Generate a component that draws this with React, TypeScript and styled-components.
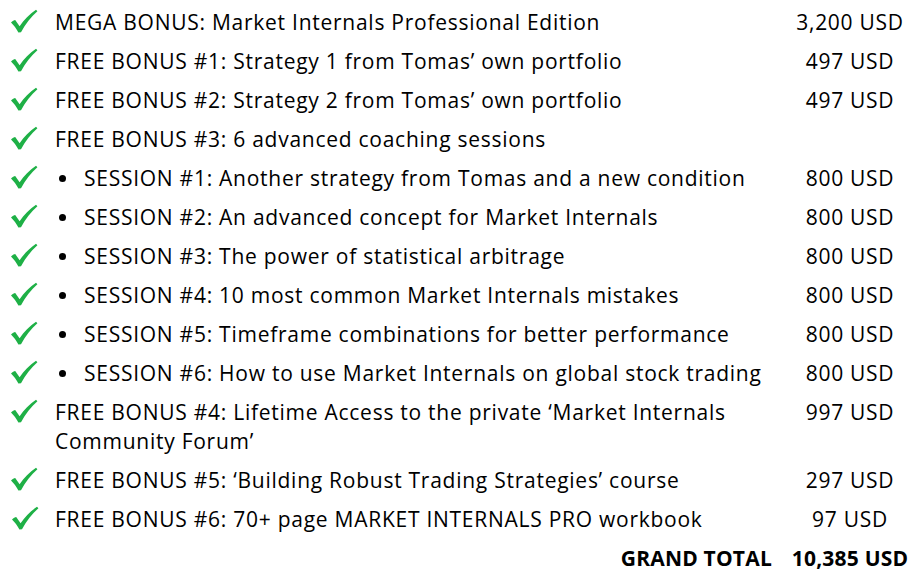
import React from "react";
import styled, { createGlobalStyle } from "styled-components";

const Global = createGlobalStyle`
  html, body { margin: 0; padding: 0; background: #ffffff; }
  body { font-family: "Open Sans", "Noto Sans", sans-serif; color: #000; }
`;

const Page = styled.div`
  width: 918px;
  height: 582px;
  padding-top: 3px;
  box-sizing: border-box;
  overflow: hidden;
`;

const Row = styled.div`
  display: grid;
  grid-template-columns: 55px 735px 120px;
  align-items: start;
  padding: 5px 0;
  font-size: 21px;
  letter-spacing: 0.74px;
  line-height: 29px;
`;

const CheckCell = styled.div<{ $dx?: number }>`
  display: flex;
  align-items: flex-start;
  padding-left: ${(p) => 10 + (p.$dx ?? 0)}px;
  height: 29px;
  box-sizing: border-box;
  padding-top: 1px;
`;

const Text = styled.div`
  display: flex;
  align-items: center;
  white-space: nowrap;
`;

const Bullet = styled.span`
  display: inline-block;
  flex: none;
  width: 7px;
  height: 7px;
  border-radius: 50%;
  background: #000;
  margin: 0 18px 0 4px;
`;

const Price = styled.div<{ $bold?: boolean }>`
  text-align: center;
  font-weight: ${(p) => (p.$bold ? 700 : 400)};
  letter-spacing: ${(p) => (p.$bold ? "0.2px" : "0.72px")};
`;

const TotalLabel = styled.div`
  grid-column: 2;
  text-align: right;
  padding-right: 18px;
  font-weight: 700;
  letter-spacing: 0.2px;
`;

const Check = ({ dx }: { dx?: number }) => (
  <CheckCell $dx={dx}>
    <svg width="28" height="24" viewBox="0 0 28 24">
      <path
        d="M1 13.5 C2.5 12 4 11.2 5.2 11 L9.6 17.2 C14 11 19.5 5.2 26 0.8 L27.4 2.2 C21 8 15.5 15 11 23.2 L8.4 23.4 C6.4 19.6 3.8 16.2 1 13.5 Z"
        fill="#1eb046"
      />
    </svg>
  </CheckCell>
);

type Item = { text: React.ReactNode; price?: string; sub?: boolean; dx?: number };

const items: Item[] = [
  { text: "MEGA BONUS: Market Internals Professional Edition", price: "3,200 USD" },
  { text: "FREE BONUS #1: Strategy 1 from Tomas\u2019 own portfolio", price: "497 USD" },
  { text: "FREE BONUS #2: Strategy 2 from Tomas\u2019 own portfolio", price: "497 USD" },
  { text: "FREE BONUS #3: 6 advanced coaching sessions" },
  { text: "SESSION #1: Another strategy from Tomas and a new condition", price: "800 USD", sub: true },
  { text: "SESSION #2: An advanced concept for Market Internals", price: "800 USD", sub: true },
  { text: "SESSION #3: The power of statistical arbitrage", price: "800 USD", sub: true },
  { text: "SESSION #4: 10 most common Market Internals mistakes", price: "800 USD", sub: true },
  { text: "SESSION #5: Timeframe combinations for better performance", price: "800 USD", sub: true },
  { text: "SESSION #6: How to use Market Internals on global stock trading", price: "800 USD", sub: true },
  {
    text: (
      <span>
        FREE BONUS #4: Lifetime Access to the private {"\u2018"}Market Internals
        <br />
        Community Forum{"\u2019"}
      </span>
    ),
    price: "997 USD",
  },
  { text: "FREE BONUS #5: \u2018Building Robust Trading Strategies\u2019 course", price: "297 USD" },
  { text: "FREE BONUS #6: 70+ page MARKET INTERNALS PRO workbook", price: "97 USD", dx: 1 },
];

export default function App() {
  return (
    <Page>
      <Global />
      {items.map((it, i) => (
        <Row key={i}>
          <Check dx={it.dx} />
          <Text>
            {it.sub && <Bullet />}
            {it.text}
          </Text>
          <Price>{it.price ?? ""}</Price>
        </Row>
      ))}
      <Row>
        <TotalLabel>GRAND TOTAL</TotalLabel>
        <Price $bold>10,385 USD</Price>
      </Row>
    </Page>
  );
}
